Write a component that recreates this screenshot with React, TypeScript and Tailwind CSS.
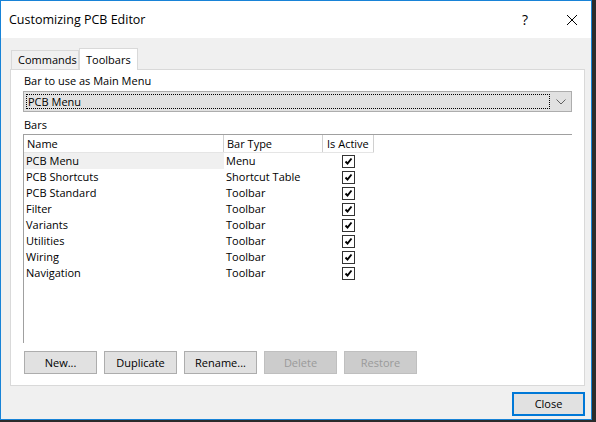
import React from "react";

const bars = [
  { name: "PCB Menu", type: "Menu" },
  { name: "PCB Shortcuts", type: "Shortcut Table" },
  { name: "PCB Standard", type: "Toolbar" },
  { name: "Filter", type: "Toolbar" },
  { name: "Variants", type: "Toolbar" },
  { name: "Utilities", type: "Toolbar" },
  { name: "Wiring", type: "Toolbar" },
  { name: "Navigation", type: "Toolbar" },
];

const Check = () => (
  <div className="w-[13px] h-[13px] border border-[#333333] bg-white flex items-center justify-center">
    <svg width="9" height="9" viewBox="0 0 9 9">
      <polyline points="1.5,4.5 3.5,6.5 7.5,1.5" fill="none" stroke="#000" strokeWidth="1.9" />
    </svg>
  </div>
);

const Btn = ({ label, disabled }: { label: string; disabled?: boolean }) => (
  <div
    className={
      disabled
        ? "w-[73px] h-[23px] flex items-center justify-center border border-[#bfbfbf] bg-[#cccccc] text-[#9a9a9a]"
        : "w-[73px] h-[23px] flex items-center justify-center border border-[#adadad] bg-[#e1e1e1] text-black"
    }
  >
    {label}
  </div>
);

export default function App() {
  return (
    <div
      className="w-[596px] h-[422px] bg-[#2b2b2b] overflow-hidden text-[11px] leading-[16px] text-black"
      style={{ fontFamily: "'Open Sans', 'Noto Sans', sans-serif" }}
    >
      <div className="w-[592px] h-[420px] border border-[#1883d7] flex flex-col bg-[#f0f0f0]">
        {/* Title bar */}
        <div className="h-[37px] bg-white flex items-center pl-[8px] shrink-0">
          <span className="text-[12.5px] text-black">Customizing PCB Editor</span>
          <span className="ml-auto text-[14px] text-black mr-[38px]">?</span>
          <svg width="12" height="12" viewBox="0 0 12 12" className="mr-[13px]">
            <path d="M1 1 L11 11 M11 1 L1 11" stroke="#000" strokeWidth="1" />
          </svg>
        </div>

        {/* Body */}
        <div className="flex-1 flex flex-col pl-[9px] pr-[6px] pt-[10px]">
          {/* Tabs */}
          <div className="flex items-end h-[21px] relative z-10">
            <div className="ml-[1px] w-[68px] h-[19px] border border-b-0 border-[#d9d9d9] bg-[#f0f0f0] pl-[6px] flex items-center">
              Commands
            </div>
            <div className="w-[59px] h-[22px] -mb-px border border-b-0 border-[#d9d9d9] bg-white pl-[6px] flex items-center">
              Toolbars
            </div>
          </div>

          {/* Panel */}
          <div className="h-[317px] border border-[#d9d9d9] bg-white flex flex-col px-[12px] pt-[3px]">
            <div className="pl-[1px]">Bar to use as Main Menu</div>
            <div className="mt-[2px] h-[21px] border border-[#adadad] bg-[#e1e1e1] flex items-center pl-[2px] pr-[3px]">
              <div className="flex-1 h-[15px] border border-dotted border-black flex items-center pl-[1px]">
                PCB Menu
              </div>
              <svg width="10" height="6" viewBox="0 0 10 6" className="ml-[6px] mr-[2px]">
                <path d="M0.5 0.5 L5 5 L9.5 0.5" fill="none" stroke="#606060" strokeWidth="1" />
              </svg>
            </div>

            <div className="mt-[5px] pl-[1px]">Bars</div>

            <div className="mt-[1px] h-[209px] border-t border-l border-[#a0a0a0] flex flex-col">
              <div className="flex h-[18px] border-b border-[#e5e5e5] w-[350px]">
                <div className="w-[200px] border-r border-[#d0d0d0] pl-[3px] flex items-center">Name</div>
                <div className="w-[99px] border-r border-[#d0d0d0] pl-[3px] flex items-center">Bar Type</div>
                <div className="w-[51px] border-r border-[#d0d0d0] pl-[4px] flex items-center">Is Active</div>
              </div>
              {bars.map((b, i) => (
                <div key={b.name} className="flex h-[16px]">
                  <div className={i === 0 ? "w-[200px] pl-[2px] bg-[#f0f0f0] flex items-center" : "w-[200px] pl-[2px] flex items-center"}>
                    {b.name}
                  </div>
                  <div className="w-[99px] pl-[2px] flex items-center">{b.type}</div>
                  <div className="w-[51px] flex items-center justify-center">
                    <Check />
                  </div>
                </div>
              ))}
            </div>

            <div className="mt-[8px] ml-[1px] flex gap-[7px]">
              <Btn label="New..." />
              <Btn label="Duplicate" />
              <Btn label="Rename..." />
              <Btn label="Delete" disabled />
              <Btn label="Restore" disabled />
            </div>
          </div>

          <div className="flex justify-end mt-[6px]">
            <div className="w-[73px] h-[24px] border-2 border-[#0078d7] bg-[#e1e1e1] flex items-center justify-center">
              Close
            </div>
          </div>
        </div>
      </div>
    </div>
  );
}
